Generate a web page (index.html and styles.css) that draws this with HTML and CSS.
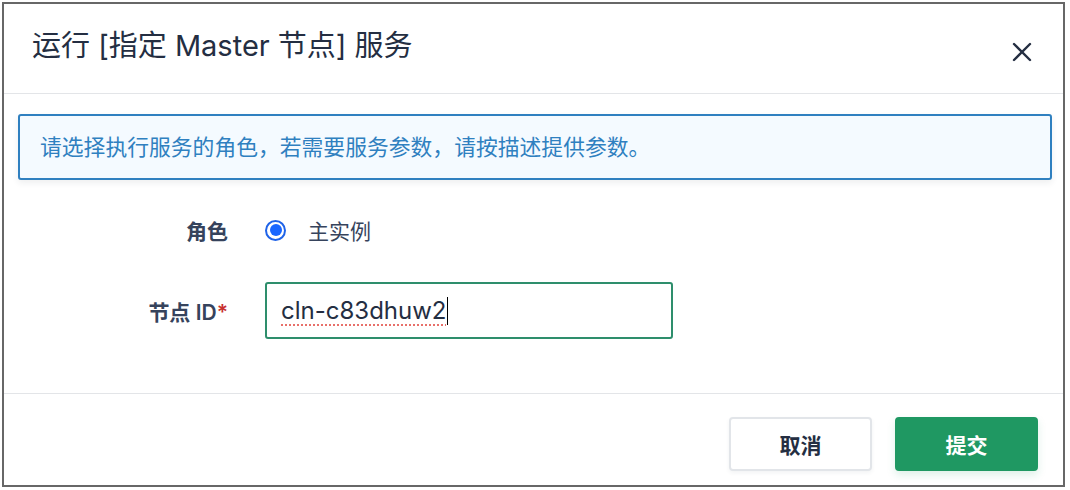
FILE: index.html
```html
<!DOCTYPE html>
<html lang="zh-CN">
<head>
    <meta charset="UTF-8">
    <title>运行服务</title>
    <link rel="stylesheet" href="styles.css">
</head>
<body>
    <div class="dialog">
        <div class="dialog-header">
            <h2 class="dialog-title">运行 [指定 Master 节点] 服务</h2>
            <button class="close" aria-label="关闭">
                <svg width="20" height="20" viewBox="0 0 20 20">
                    <path d="M2 2 L18 18 M18 2 L2 18" stroke="#242e42" stroke-width="2.4" stroke-linecap="round"/>
                </svg>
            </button>
        </div>
        <div class="dialog-body">
            <div class="notice">请选择执行服务的角色，若需要服务参数，请按描述提供参数。</div>
            <div class="form">
                <div class="form-row">
                    <label class="form-label">角色</label>
                    <div class="form-control radio-group">
                        <span class="radio"></span>
                        <span class="radio-text">主实例</span>
                    </div>
                </div>
                <div class="form-row">
                    <label class="form-label">节点 ID<span class="req">*</span></label>
                    <div class="form-control">
                        <div class="input"><span class="misspelt">cln-c83dhuw2</span><span class="caret"></span></div>
                    </div>
                </div>
            </div>
        </div>
        <div class="dialog-footer">
            <button class="btn">取消</button>
            <button class="btn btn-primary">提交</button>
        </div>
    </div>
</body>
</html>
```

FILE: styles.css
```css
*{margin: 0;padding: 0;box-sizing: border-box;}
body{
    background: #fff;
    font-family: "Inter", "Noto Sans CJK SC", sans-serif;
    color: #242e42;
}
.dialog{
    margin: 2px 5px 2px 2px;
    height: 485px;
    border: 2px solid #676767;
    display: flex;
    flex-direction: column;
}
.dialog-header{
    height: 90px;
    border-bottom: 1px solid #e3e5e8;
    display: flex;
    align-items: center;
    justify-content: space-between;
    padding: 0 31px 0 28px;
}
.dialog-title{
    font-size: 29px;
    font-weight: 400;
    line-height: 36px;
    margin-top: -6px;
}
.close{
    border: none;
    background: none;
    width: 20px;
    height: 20px;
    margin-top: 6px;
}
.dialog-body{
    height: 300px;
    padding: 20px 11px 0 14px;
    border-bottom: 1px solid #e3e5e8;
}
.notice{
    height: 66px;
    border: 2px solid #2f80c0;
    border-radius: 3px;
    background: #f4faff;
    box-shadow: 0 3px 6px rgba(36,46,66,.08);
    color: #2f80c0;
    font-size: 21.8px;
    line-height: 62px;
    padding-left: 20px;
}
.form-row{
    display: flex;
    align-items: center;
}
.form-row:first-child{
    height: 40px;
    margin-top: 30px;
}
.form-row + .form-row{
    margin-top: 32px;
}
.form-label{
    width: 210px;
    text-align: right;
    font-size: 21px;
    font-weight: 600;
    color: #36435c;
    margin-right: 37px;
}
.req{
    color: #c8302f;
}
.radio-group{
    display: flex;
    align-items: center;
}
.radio{
    width: 21px;
    height: 21px;
    border: 2px solid #1f63e8;
    border-radius: 50%;
    display: flex;
    align-items: center;
    justify-content: center;
    margin-right: 22px;
}
.radio::after{
    content: "";
    width: 12px;
    height: 12px;
    border-radius: 50%;
    background: #1866ff;
}
.radio-text{
    font-size: 21px;
    color: #36435c;
}
.input{
    width: 408px;
    height: 57px;
    border: 2px solid #2e8e6c;
    border-radius: 3px;
    padding-left: 14px;
    display: flex;
    align-items: center;
    font-size: 24px;
    color: #242e42;
}
.misspelt{
    text-decoration: underline dotted #e8706a;
    text-decoration-thickness: 2px;
    text-underline-offset: 5px;
}
.caret{
    width: 1px;
    height: 28px;
    background: #000;
    margin-left: 1px;
}
.dialog-footer{
    flex: 1;
    display: flex;
    justify-content: flex-end;
    align-items: flex-start;
    gap: 23px;
    padding: 23px 25px 0 0;
}
.btn{
    width: 143px;
    height: 54px;
    border: 2px solid #e2e5e9;
    border-radius: 4px;
    background: #fff;
    font-family: inherit;
    font-size: 21px;
    font-weight: 600;
    color: #242e42;
    box-shadow: 0 2px 4px rgba(36,46,66,.06);
}
.btn-primary{
    border-color: #1f9862;
    background: #1f9862;
    color: #fff;
    box-shadow: 0 4px 8px rgba(31,152,98,.15);
}
```
